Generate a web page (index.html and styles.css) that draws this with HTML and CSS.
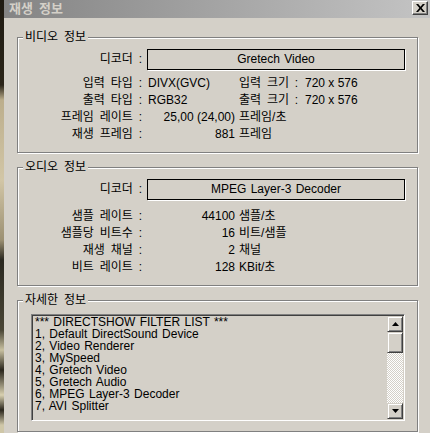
FILE: index.html
```html
<!DOCTYPE html>
<html>
    <head>
        <title>재생 정보</title>
        <meta charset="UTF-8">
        <link rel="stylesheet" href="styles.css">
    </head>
    <body>
        <div class="screen">
            <div class="backdrop"></div>
            <div class="window">
                <div class="titlebar">
                    <span class="caption">재생 정보</span>
                    <div class="close">
                        <svg width="9" height="8" viewBox="0 0 9 8">
                            <path d="M0 0h2.2l2.3 2.7 2.3-2.7h2.2l-3.4 4 3.4 4h-2.2l-2.3-2.7-2.3 2.7h-2.2l3.4-4z" fill="#000"/>
                        </svg>
                    </div>
                </div>

                <div class="content">
                    <fieldset class="group video">
                        <legend>비디오 정보</legend>
                        <div class="info">
                            <span class="key">디코더 :</span>
                            <div class="field">Gretech Video</div>

                            <span class="key">입력 타입 :</span>
                            <span>DIVX(GVC)</span>
                            <span class="key2">입력 크기 :</span>
                            <span>720 x 576</span>

                            <span class="key">출력 타입 :</span>
                            <span>RGB32</span>
                            <span class="key2">출력 크기 :</span>
                            <span>720 x 576</span>

                            <span class="key">프레임 레이트 :</span>
                            <span class="num">25,00 (24,00)</span>
                            <span class="unit">프레임/초</span>

                            <span class="key">재생 프레임 :</span>
                            <span class="num">881</span>
                            <span class="unit">프레임</span>
                        </div>
                    </fieldset>

                    <fieldset class="group audio">
                        <legend>오디오 정보</legend>
                        <div class="info">
                            <span class="key">디코더 :</span>
                            <div class="field">MPEG Layer-3 Decoder</div>

                            <span class="key">샘플 레이트 :</span>
                            <span class="num">44100</span>
                            <span class="unit">샘플/초</span>

                            <span class="key">샘플당 비트수 :</span>
                            <span class="num">16</span>
                            <span class="unit">비트/샘플</span>

                            <span class="key">재생 채널 :</span>
                            <span class="num">2</span>
                            <span class="unit">채널</span>

                            <span class="key">비트 레이트 :</span>
                            <span class="num">128</span>
                            <span class="unit">KBit/초</span>
                        </div>
                    </fieldset>

                    <fieldset class="group detail">
                        <legend>자세한 정보</legend>
                        <div class="list">
                            <div class="lines">
                                <div>*** DIRECTSHOW FILTER LIST ***</div>
                                <div>1, Default DirectSound Device</div>
                                <div>2, Video Renderer</div>
                                <div>3, MySpeed</div>
                                <div>4, Gretech Video</div>
                                <div>5, Gretech Audio</div>
                                <div>6, MPEG Layer-3 Decoder</div>
                                <div>7, AVI Splitter</div>
                            </div>
                            <div class="scroll">
                                <div class="btn">
                                    <svg width="7" height="4" viewBox="0 0 7 4"><path d="M3.5 0L7 4H0z" fill="#000"/></svg>
                                </div>
                                <div class="btn thumb"></div>
                                <div class="track"></div>
                                <div class="btn">
                                    <svg width="7" height="4" viewBox="0 0 7 4"><path d="M0 0h7L3.5 4z" fill="#000"/></svg>
                                </div>
                            </div>
                        </div>
                    </fieldset>
                </div>
            </div>
        </div>
    </body>
</html>
```

FILE: styles.css
```css
body {
    margin: 0;
    font-family: "Liberation Sans", "Noto Sans CJK KR", sans-serif;
    font-size: 12px;
    color: #000;
    background: #d4d0c8;
}

.screen {
    display: flex;
    width: 430px;
    height: 433px;
    overflow: hidden;
}

.backdrop {
    width: 4px;
    flex: none;
    background: linear-gradient(#1e1a12 0, #2b2519 85px, #bcae8c 100px, #d2c6a6 180px, #9c9072 240px, #2a2820 260px, #4a4636 330px, #c8c0a0 350px, #2a261c 370px, #d8d0b0 395px, #2a261c 410px, #cfc7a8 425px);
}

.window {
    flex: 1;
    background: #d4d0c8;
}

.titlebar {
    height: 18px;
    display: flex;
    justify-content: space-between;
    align-items: flex-start;
    background: linear-gradient(to right, #848484, #c4c4c4);
}

.caption {
    padding-left: 5px;
    line-height: 17px;
    font-size: 13px;
    font-weight: bold;
    word-spacing: 2.5px;
    color: #d4d0c8;
}

.close {
    width: 16px;
    height: 14px;
    margin: 1px 2px 0 0;
    box-sizing: border-box;
    display: flex;
    align-items: center;
    justify-content: center;
    background: #d4d0c8;
    border: 1px solid;
    border-color: #fff #404040 #404040 #fff;
    box-shadow: inset -1px -1px 0 #808080;
}

.content {
    padding-top: 12px;
}

.group {
    margin: 0 12px 0 13px;
    padding: 5px 0 9px;
    min-width: 0;
    border: 1px solid #808080;
    box-shadow: 1px 1px 0 #fff, inset 1px 1px 0 #fff;
}

.audio {
    margin-top: 7px;
}

.detail {
    margin-top: 7px;
    padding: 7px 0 10px;
}

legend {
    margin-left: 5px;
    padding: 0 2px;
    line-height: 14px;
    word-spacing: 2.5px;
    background: #d4d0c8;
}

.info {
    display: grid;
    grid-template-columns: 126px 87px 62px 1fr;
    column-gap: 4px;
    line-height: 17px;
}

.key {
    grid-column: 1;
    padding-right: 2px;
    text-align: right;
    white-space: nowrap;
    word-spacing: 2.5px;
}

.key2,
.unit {
    word-spacing: 2.5px;
}

.field {
    grid-column: 2 / 5;
    width: 258px;
    height: 21px;
    margin: 0 0 5px -1px;
    box-sizing: border-box;
    border: 1px solid #000;
    box-shadow: 1px 1px 0 #fff;
    line-height: 19px;
    text-align: center;
    word-spacing: 1px;
}

.info > .key:first-child {
    line-height: 21px;
}

.audio .field {
    margin-bottom: 8px;
}

.num {
    text-align: right;
}

.unit {
    grid-column: 3 / 5;
}

.list {
    display: flex;
    width: 374px;
    height: 107px;
    margin-left: 13px;
    padding: 1px;
    box-sizing: border-box;
    border: 1px solid;
    border-color: #808080 #fff #fff #808080;
    box-shadow: inset 1px 1px 0 #404040, inset -1px -1px 0 #d4d0c8;
}

.lines {
    flex: 1;
    padding: 0 2px;
    line-height: 12px;
    word-spacing: 1px;
    white-space: nowrap;
    overflow: hidden;
}

.scroll {
    width: 16px;
    display: flex;
    flex-direction: column;
}

.btn {
    height: 16px;
    flex: none;
    box-sizing: border-box;
    display: flex;
    align-items: center;
    justify-content: center;
    background: #d4d0c8;
    border: 1px solid;
    border-color: #d4d0c8 #404040 #404040 #d4d0c8;
    box-shadow: inset 1px 1px 0 #fff, inset -1px -1px 0 #808080;
}

.thumb {
    height: 21px;
}

.track {
    flex: 1;
    background: conic-gradient(#fff 25%, #d4d0c8 0 50%, #fff 0 75%, #d4d0c8 0) 0 0 / 2px 2px;
}
```
